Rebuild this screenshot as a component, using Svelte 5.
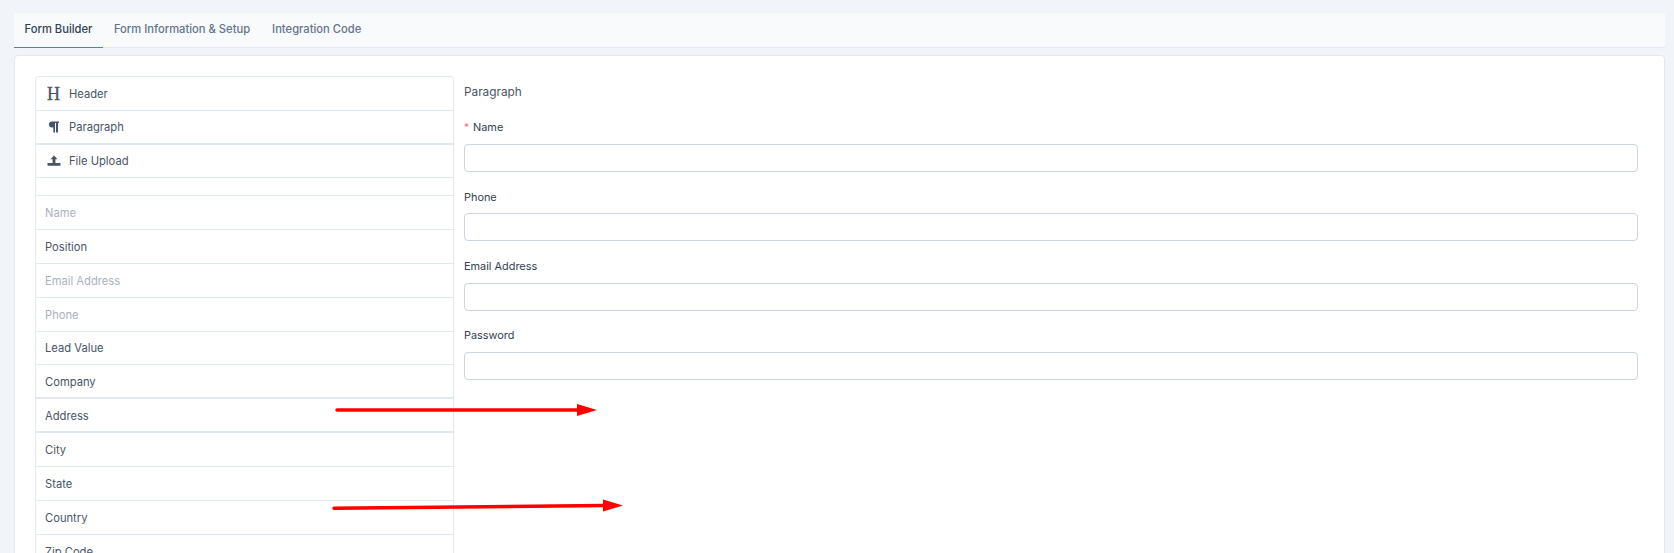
<script>
  const tabs = ['Form Builder', 'Form Information & Setup', 'Integration Code'];
  const tools = [
    { label: 'Header', icon: 'h' },
    { label: 'Paragraph', icon: 'p', thick: true },
    { label: 'File Upload', icon: 'u', short: true }
  ];
  const fields = [
    { label: 'Name', off: true },
    { label: 'Position' },
    { label: 'Email Address', off: true },
    { label: 'Phone', off: true },
    { label: 'Lead Value' },
    { label: 'Company', thick: true },
    { label: 'Address', thick: true },
    { label: 'City' },
    { label: 'State' },
    { label: 'Country' },
    { label: 'Zip Code' }
  ];
  const inputs = [
    { label: 'Name', required: true },
    { label: 'Phone' },
    { label: 'Email Address' },
    { label: 'Password' }
  ];
</script>

<div class="page">
  <nav class="tabs">
    {#each tabs as tab, i}
      <span class="tab" class:active={i === 0}>{tab}</span>
    {/each}
  </nav>

  <main class="card">
    <ul class="list">
      {#each tools as t}
        <li class="row tool" class:thick={t.thick} class:short={t.short}>
          <span class="icon">
            {#if t.icon === 'h'}
              <span class="h-glyph">H</span>
            {:else if t.icon === 'p'}
              <svg width="14" height="14" viewBox="0 0 14 14"><path fill="#475569" d="M5 1.500h7v1.400h-1v9.600H9V2.900H8v9.600H6.300V7.600H5A3 3 0 0 1 5 1.500z"/></svg>
            {:else}
              <svg width="14" height="14" viewBox="0 0 14 14"><path fill="#475569" d="M7 1.500l3.500 3.800H8.400v3.700H5.600V5.300H3.500zM0.500 9h13v2.800h-13z"/></svg>
            {/if}
          </span>
          {t.label}
        </li>
      {/each}
      <li class="row spacer"></li>
      {#each fields as f}
        <li class="row field" class:off={f.off} class:thick={f.thick}>{f.label}</li>
      {/each}
    </ul>

    <section class="form">
      <p class="title">Paragraph</p>
      {#each inputs as field}
        <div class="group">
          <label for={field.label}>
            {#if field.required}<span class="req">*</span>{/if}{field.label}
          </label>
          <input id={field.label} type="text" />
        </div>
      {/each}
    </section>
  </main>

  <svg class="arrows" width="1674" height="553" viewBox="0 0 1674 553">
    <path d="M337 410H578" stroke="#f00" stroke-width="3.500" stroke-linecap="round"/>
    <path d="M577 404L597 410L577 416z" fill="#f00"/>
    <path d="M334 508.300L604 505.600" stroke="#f00" stroke-width="3.500" stroke-linecap="round"/>
    <path d="M603 499.500L623 505.500L603 511.500z" fill="#f00"/>
  </svg>
</div>

<style>
  :global(body) {
    margin: 0;
    background: #f1f5f9;
    overflow: hidden;
  }
  .page {
    position: relative;
    height: 553px;
    overflow: hidden;
    padding: 13px 9px 0 14px;
    box-sizing: border-box;
    font-family: Inter, "Liberation Sans", sans-serif;
    font-size: 11.2px;
    color: #475569;
  }
  .tabs {
    display: flex;
    height: 35px;
    background: #f8fafc;
    border-bottom: 1px solid #e2e8f0;
    box-sizing: border-box;
  }
  .tab {
    padding: 0 11px 0 10.500px;
    line-height: 33px;
    font-weight: 500;
    color: #64748b;
    margin-bottom: -1px;
  }
  .tab:last-child {
    padding-left: 11px;
  }
  .tab.active {
    color: #334155;
    border-bottom: 1px solid #3b82f6;
  }
  .card {
    display: flex;
    gap: 10px;
    align-items: flex-start;
    margin-top: 7px;
    padding: 20px 26px 0 20px;
    height: 600px;
    box-sizing: border-box;
    background: #fff;
    border: 1px solid #e2e8f0;
    border-radius: 4px;
  }
  .list {
    width: 419px;
    flex: none;
    margin: 0;
    padding: 0;
    list-style: none;
    border: 1px solid #e2e8f0;
    border-radius: 4px;
    box-sizing: border-box;
  }
  .row {
    height: 33.900px;
    box-sizing: border-box;
    display: flex;
    align-items: center;
    border-bottom: 1px solid #e2e8f0;
    color: #475569;
    padding: 1px 0 0 9px;
  }
  .row.thick {
    border-bottom-width: 2px;
  }
  .row.short {
    height: 33.500px;
    padding-top: 0;
  }
  .tool {
    padding-left: 11px;
  }
  .icon {
    width: 22px;
    display: flex;
    justify-content: flex-start;
    align-items: center;
    flex: none;
  }
  .h-glyph {
    font-family: "Liberation Serif", serif;
    font-size: 18px;
    line-height: 1;
    color: #475569;
    -webkit-text-stroke: 0.3px #475569;
  }
  .row.spacer {
    height: 17.700px;
  }
  .row.off {
    color: #aab2bf;
  }
  .form {
    flex: 1;
    min-width: 0;
  }
  .title {
    margin: 0;
    padding-top: 8px;
    height: 39px;
    box-sizing: border-box;
    line-height: 16px;
    font-size: 11.800px;
    color: #475569;
  }
  .group {
    height: 69.300px;
  }
  .group label {
    display: block;
    height: 29px;
    padding-top: 4.300px;
    box-sizing: border-box;
    line-height: 16px;
    font-size: 10.900px;
    font-weight: 400;
    color: #334155;
  }
  .req {
    color: #f87171;
    margin-right: 4px;
    font-size: 10px;
  }
  .group input {
    display: block;
    width: 100%;
    height: 28px;
    box-sizing: border-box;
    border: 1px solid #cbd5e1;
    border-radius: 4px;
    background: #fff;
    padding: 0 8px;
    outline: none;
  }
  .arrows {
    position: absolute;
    left: 0;
    top: 0;
    pointer-events: none;
  }
</style>
